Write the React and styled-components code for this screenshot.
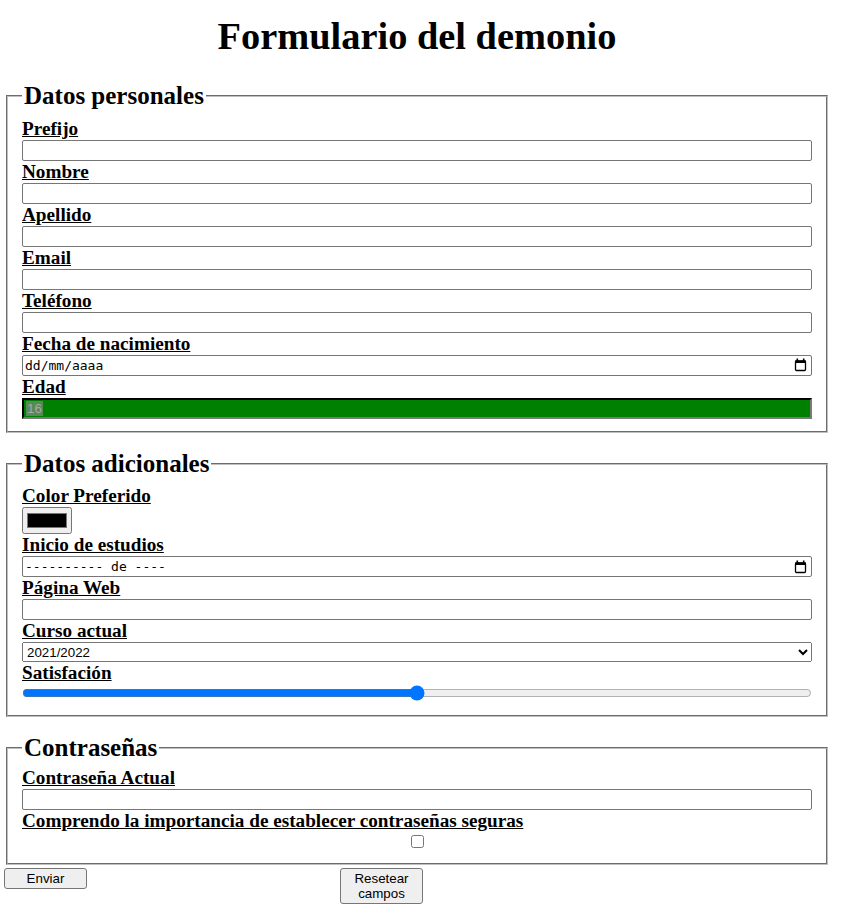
import React, { useState } from "react";
import styled, { createGlobalStyle } from "styled-components";

const GlobalStyle = createGlobalStyle`
  body {
    margin: 0;
    background: #fff;
    color: #000;
    font-family: "Liberation Serif", "Times New Roman", serif;
  }
`;

const Page = styled.div`
  padding: 0 36px 0 6px;
`;

const Title = styled.h1`
  margin: 14px 0 24px;
  text-align: center;
  font-size: 38.4px;
  font-weight: bold;
`;

const Fieldset = styled.fieldset`
  margin: ${({ $first }) => ($first ? "0" : "17px 0 0")};
  padding: ${({ $top = 7.6 }) => $top}px 14px 12px;
  border: 2px groove #c0c0c0;
  min-width: 0;
`;

const Legend = styled.legend`
  padding: 0 2px;
  font-size: 25px;
  font-weight: bold;
`;

const Label = styled.label`
  display: block;
  font-size: 19.2px;
  font-weight: bold;
  text-decoration: underline;
`;

const TextInput = styled.input`
  display: block;
  box-sizing: border-box;
  width: 100%;
  height: 21px;
  margin: 0;
  padding: 1px 2px;
  border: 1px solid #767676;
  border-radius: 2px;
  background: #fff;
  font: 13.33px "Liberation Sans", Arial, sans-serif;
`;

const DateBox = styled.div`
  display: flex;
  align-items: center;
  justify-content: space-between;
  box-sizing: border-box;
  height: 21px;
  padding: 0 4px 0 2px;
  border: 1px solid #767676;
  border-radius: 2px;
  font: 13px "DejaVu Sans Mono", "Liberation Mono", monospace;
  white-space: pre;
`;

const AgeBox = styled.div`
  display: flex;
  align-items: center;
  box-sizing: border-box;
  height: 21px;
  padding: 0 2px;
  border: 2px inset;
  border-color: #1c1c1c #7a7a7a #7a7a7a #1c1c1c;
  background: #008000;
`;

const AgeValue = styled.span`
  padding: 0 1px;
  background: #568a56;
  color: #a8a8a8;
  font: 13.33px "Liberation Sans", Arial, sans-serif;
  line-height: 15px;
`;

const ColorInput = styled.input`
  display: block;
  width: 50px;
  height: 27px;
  margin: 0;
`;

const Select = styled.select`
  display: block;
  box-sizing: border-box;
  width: 100%;
  height: 20px;
  margin: 0;
  font: 13.33px "Liberation Sans", Arial, sans-serif;
  color: #000;
`;

const Range = styled.input`
  display: block;
  box-sizing: border-box;
  width: 100%;
  margin: 1px 0 2px;
`;

const Checkbox = styled.input`
  display: block;
  margin: 3px auto;
`;

const ButtonRow = styled.div`
  display: flex;
  align-items: flex-start;
  gap: 253px;
  margin: 3px 0 0 -2px;
`;

const Button = styled.button`
  width: 83px;
  padding: 2px 6px;
  border: 1px solid #767676;
  border-radius: 3px;
  background: #efefef;
  color: #000;
  font: 13.33px "Liberation Sans", Arial, sans-serif;
`;

const CalendarIcon = () => (
  <svg width="13" height="14" viewBox="0 0 13 14">
    <rect x="1.5" y="3" width="10" height="9.5" rx="1" fill="none" stroke="#000" strokeWidth="1.3" />
    <rect x="1" y="2.5" width="11" height="2.5" fill="#000" />
    <rect x="2.5" y="0.5" width="1.6" height="2.5" fill="#000" />
    <rect x="8.9" y="0.5" width="1.6" height="2.5" fill="#000" />
  </svg>
);

const personal = ["Prefijo", "Nombre", "Apellido", "Email", "Teléfono"];

export default function App() {
  const [satisfaction, setSatisfaction] = useState(50);

  return (
    <Page>
      <GlobalStyle />
      <Title>Formulario del demonio</Title>
      <form onSubmit={(e) => e.preventDefault()}>
        <Fieldset $first>
          <Legend>Datos personales</Legend>
          {personal.map((name) => (
            <React.Fragment key={name}>
              <Label>{name}</Label>
              <TextInput type="text" />
            </React.Fragment>
          ))}
          <Label>Fecha de nacimiento</Label>
          <DateBox>
            <span>dd/mm/aaaa</span>
            <CalendarIcon />
          </DateBox>
          <Label>Edad</Label>
          <AgeBox>
            <AgeValue>16</AgeValue>
          </AgeBox>
        </Fieldset>

        <Fieldset>
          <Legend>Datos adicionales</Legend>
          <Label>Color Preferido</Label>
          <ColorInput type="color" defaultValue="#000000" />
          <Label>Inicio de estudios</Label>
          <DateBox>
            <span>---------- de ----</span>
            <CalendarIcon />
          </DateBox>
          <Label>Página Web</Label>
          <TextInput type="url" />
          <Label>Curso actual</Label>
          <Select defaultValue="2021/2022">
            <option>2021/2022</option>
            <option>2022/2023</option>
          </Select>
          <Label>Satisfación</Label>
          <Range
            type="range"
            min="0"
            max="100"
            value={satisfaction}
            onChange={(e) => setSatisfaction(e.target.value)}
          />
        </Fieldset>

        <Fieldset $top={5}>
          <Legend>Contraseñas</Legend>
          <Label>Contraseña Actual</Label>
          <TextInput type="password" />
          <Label>Comprendo la importancia de establecer contraseñas seguras</Label>
          <Checkbox type="checkbox" />
        </Fieldset>

        <ButtonRow>
          <Button type="submit">Enviar</Button>
          <Button type="reset">Resetear campos</Button>
        </ButtonRow>
      </form>
    </Page>
  );
}
